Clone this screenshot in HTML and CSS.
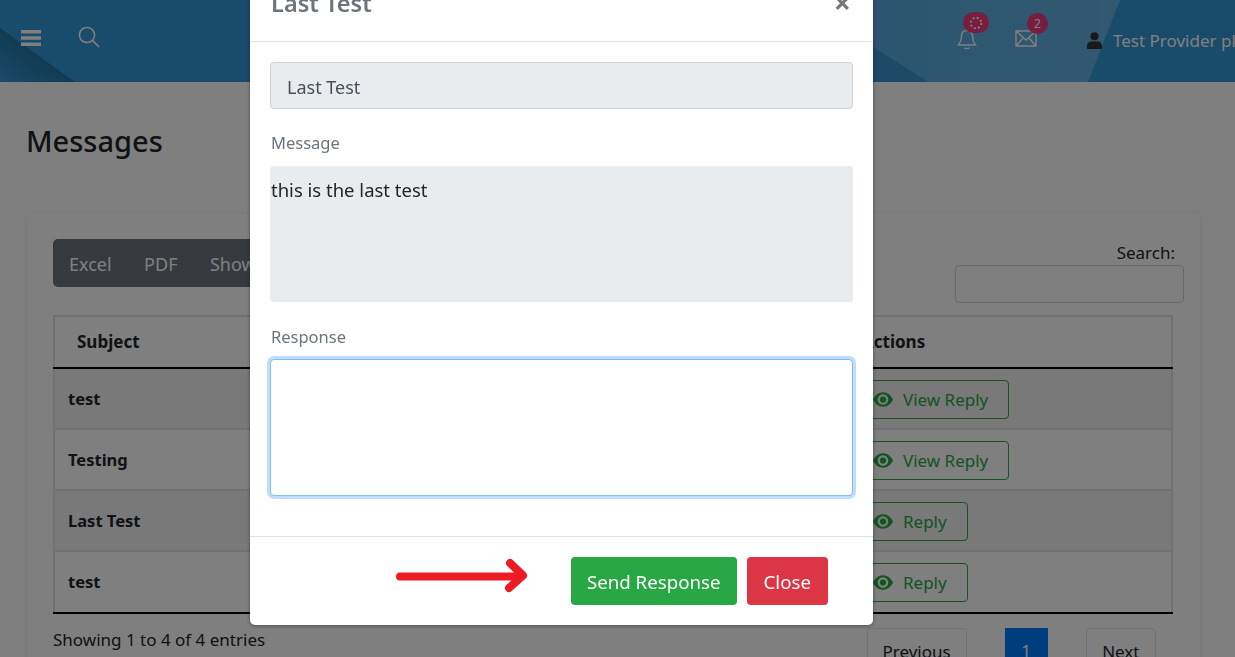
FILE: index.html
```html
<!DOCTYPE html>
<html lang="en">
<head>
    <meta charset="UTF-8">
    <meta name="viewport" content="width=device-width, initial-scale=1.0">
    <title>Messages</title>
    <link rel="stylesheet" href="styles.css">
</head>
<body>
    <header class="topbar">
        <svg class="topbar-bg" viewBox="0 0 1235 82" preserveAspectRatio="none">
            <defs>
                <linearGradient id="shade" x1="0" y1="1" x2="0.55" y2="0.45">
                    <stop offset="0" stop-color="#3298d6"/>
                    <stop offset="1" stop-color="#24709f"/>
                </linearGradient>
                <linearGradient id="band" x1="0" y1="0" x2="1" y2="0">
                    <stop offset="0" stop-color="#56abe0"/>
                    <stop offset="1" stop-color="#66b2e2"/>
                </linearGradient>
            </defs>
            <polygon points="0,28 75,82 0,82" fill="url(#shade)"/>
            <polygon points="873,47 928,82 1088,82 1120,0 873,0" fill="url(#band)"/>
            <polygon points="873,47 928,82 873,82" fill="#3a94cc"/>
        </svg>
        <div class="topbar-left">
            <svg class="icon-bars" viewBox="0 0 20 16"><path d="M0 0h20v3.600H0zM0 6.200h20v3.600H0zM0 12.400h20V16H0z"/></svg>
            <svg class="icon-search" viewBox="0 0 22 22"><circle cx="9" cy="9" r="7.600"/><path d="M14.400 14.400L21 21"/></svg>
        </div>
        <div class="topbar-right">
            <div class="notify">
                <svg class="icon-bell" viewBox="0 0 20 20"><path d="M10 1.500c-3.500 0-5.500 2.500-5.500 6 0 4-1 6-3 8.500h17c-2-2.500-3-4.500-3-8.500 0-3.500-2-6-5.500-6z"/><path d="M8 18.500a2 1.500 0 0 0 4 0"/></svg>
                <span class="badge badge-dots">
                    <svg viewBox="0 0 14 14"><circle cx="7" cy="7" r="5.300" stroke-dasharray="2 2.160"/></svg>
                </span>
            </div>
            <div class="notify notify-mail">
                <svg class="icon-mail" viewBox="0 0 22 17"><path d="M1 1h20v15H1zM1 1l10 9 10-9M1 16l7.500-8.500M21 16l-7.500-8.500"/></svg>
                <span class="badge">2</span>
            </div>
            <div class="user">
                <svg class="icon-user" viewBox="0 0 16 18"><circle cx="8" cy="4.500" r="4.300"/><path d="M0 18v-3c0-3 2-5 4.500-5h7c2.500 0 4.500 2 4.500 5v3z"/></svg>
                <span>Test Provider platform</span>
            </div>
        </div>
    </header>

    <main class="content">
        <h1>Messages</h1>
        <section class="card">
            <div class="toolbar">
                <div class="btn-group">
                    <span>Excel</span>
                    <span>PDF</span>
                    <span>Show 10 rows</span>
                </div>
                <label class="search"><span class="search-text">Search:</span>
                    <input type="text">
                </label>
            </div>
            <table class="messages">
                <colgroup>
                    <col class="col-subject">
                    <col>
                    <col class="col-actions">
                </colgroup>
                <thead>
                    <tr>
                        <th class="th-subject">Subject</th>
                        <th></th>
                        <th>Actions</th>
                    </tr>
                </thead>
                <tbody>
                    <tr class="odd">
                        <td>test</td>
                        <td></td>
                        <td><a class="btn-outline"><svg class="icon-eye" viewBox="0 0 22 16"><path fill-rule="evenodd" d="M11 0c5 0 9 3.500 11 8-2 4.500-6 8-11 8S2 12.500 0 8c2-4.500 6-8 11-8zm0 2.200a5.800 5.800 0 1 0 0 11.600 5.800 5.800 0 0 0 0-11.600z"/><circle cx="11" cy="8" r="3.400"/></svg>View Reply</a></td>
                    </tr>
                    <tr>
                        <td>Testing</td>
                        <td></td>
                        <td><a class="btn-outline"><svg class="icon-eye" viewBox="0 0 22 16"><path fill-rule="evenodd" d="M11 0c5 0 9 3.500 11 8-2 4.500-6 8-11 8S2 12.500 0 8c2-4.500 6-8 11-8zm0 2.200a5.800 5.800 0 1 0 0 11.600 5.800 5.800 0 0 0 0-11.600z"/><circle cx="11" cy="8" r="3.400"/></svg>View Reply</a></td>
                    </tr>
                    <tr class="odd">
                        <td>Last Test</td>
                        <td></td>
                        <td><a class="btn-outline"><svg class="icon-eye" viewBox="0 0 22 16"><path fill-rule="evenodd" d="M11 0c5 0 9 3.500 11 8-2 4.500-6 8-11 8S2 12.500 0 8c2-4.500 6-8 11-8zm0 2.200a5.800 5.800 0 1 0 0 11.600 5.800 5.800 0 0 0 0-11.600z"/><circle cx="11" cy="8" r="3.400"/></svg>Reply</a></td>
                    </tr>
                    <tr class="last-row">
                        <td>test</td>
                        <td></td>
                        <td><a class="btn-outline"><svg class="icon-eye" viewBox="0 0 22 16"><path fill-rule="evenodd" d="M11 0c5 0 9 3.500 11 8-2 4.500-6 8-11 8S2 12.500 0 8c2-4.500 6-8 11-8zm0 2.200a5.800 5.800 0 1 0 0 11.600 5.800 5.800 0 0 0 0-11.600z"/><circle cx="11" cy="8" r="3.400"/></svg>Reply</a></td>
                    </tr>
                </tbody>
            </table>
            <div class="table-foot">
                <div class="info">Showing 1 to 4 of 4 entries</div>
                <div class="pagination">
                    <a class="page-btn page-prev">Previous</a>
                    <a class="page-current">1</a>
                    <a class="page-btn page-next">Next</a>
                </div>
            </div>
        </section>
    </main>

    <div class="backdrop"></div>

    <div class="modal">
        <div class="modal-header">
            <h5>Last Test</h5>
            <span class="close">&times;</span>
        </div>
        <div class="modal-body">
            <div class="subject-field">Last Test</div>
            <label class="field-label">Message</label>
            <div class="message-field">this is the last test</div>
            <label class="field-label field-label-response">Response</label>
            <textarea class="response-field"></textarea>
        </div>
        <div class="modal-footer">
            <svg class="arrow" viewBox="0 0 132 36"><path d="M4 18.500H122M114 5l13 12.500L113 30"/></svg>
            <button class="btn btn-send">Send Response</button>
            <button class="btn btn-close">Close</button>
        </div>
    </div>
</body>
</html>
```
FILE: styles.css
```css
html, body {
    height: 657px;
    overflow: hidden;
}
body {
    margin: 0;
    font-family: "Noto Sans", "Open Sans", sans-serif;
    font-size: 17px;
    color: #212529;
    background-color: #fff;
}
.topbar {
    position: relative;
    display: flex;
    justify-content: space-between;
    height: 82px;
    background-color: #3298d6;
    overflow: hidden;
}
.topbar-bg {
    position: absolute;
    left: 0;
    top: 0;
    width: 100%;
    height: 100%;
}
.topbar-left, .topbar-right {
    position: relative;
    display: flex;
    align-items: center;
}
.topbar-left {
    padding: 0 0 8px 21px;
    gap: 37px;
}
.icon-bars {
    width: 20px;
    height: 16px;
    margin-top: 2px;
    fill: #fff;
}
.icon-search {
    width: 22px;
    height: 22px;
    fill: none;
    stroke: #fff;
    stroke-width: 1.5;
}
.topbar-right {
    white-space: nowrap;
}
.notify {
    position: relative;
    width: 20px;
    height: 20px;
    margin-right: 38px;
    margin-top: -4px;
}
.notify-mail {
    width: 22px;
    margin-right: 50px;
}
.icon-bell {
    width: 20px;
    height: 20px;
    fill: none;
    stroke: #fff;
    stroke-width: 1.4;
}
.icon-mail {
    width: 22px;
    height: 17px;
    fill: none;
    stroke: #fff;
    stroke-width: 1.4;
}
.badge {
    position: absolute;
    left: 12px;
    top: -16px;
    display: flex;
    align-items: center;
    justify-content: center;
    width: 21px;
    height: 21px;
    border-radius: 50%;
    background-color: #ee3a7c;
    color: #fff;
    font-size: 12px;
}
.badge-dots {
    left: 6px;
    top: -17px;
    width: 26px;
    height: 21px;
    border-radius: 11px;
}
.badge-dots svg {
    width: 14px;
    height: 14px;
    fill: none;
    stroke: #fff;
    stroke-width: 1.8;
}
.user {
    display: flex;
    align-items: center;
    gap: 11px;
    width: 148px;
    overflow: hidden;
    color: #fff;
    font-size: 17px;
    margin-top: -1px;
}
.icon-user {
    flex: none;
    width: 15px;
    height: 17px;
    fill: #333;
}
.content {
    padding: 0 35px 0 27px;
}
h1 {
    margin: 0 0 0 -1px;
    padding-top: 39px;
    font-size: 29px;
    font-weight: 500;
    line-height: 40px;
}
.card {
    margin-top: 53px;
    padding: 25px 16px 0 26px;
    background-color: #fff;
    box-shadow: 0 0 6px rgba(0, 0, 0, 0.08);
}
.toolbar {
    display: flex;
    justify-content: space-between;
    height: 76px;
}
.btn-group {
    display: flex;
    align-items: center;
    gap: 32.500px;
    height: 48px;
    padding: 2px 16px 0;
    box-sizing: border-box;
    border-radius: 5px;
    background-color: #6c757d;
    color: #fff;
    font-size: 18px;
    white-space: nowrap;
}
.search {
    display: flex;
    flex-direction: column;
    align-items: flex-end;
    line-height: 26px;
}
.search-text {
    margin-right: 9px;
    padding-top: 1px;
    height: 25px;
}
.search input {
    width: 229px;
    height: 38px;
    box-sizing: border-box;
    border: 1px solid #ced4da;
    border-radius: 4px;
    background-color: transparent;
}
.messages {
    width: 1120px;
    border-collapse: collapse;
    table-layout: fixed;
    border: 2px solid #dee2e6;
    border-bottom: 2px solid #000;
}
.col-subject {
    width: 200px;
}
.col-actions {
    width: 323px;
}
th, td {
    padding: 0 13px;
    text-align: left;
    font-weight: 700;
}
th {
    height: 52px;
    padding-bottom: 2px;
    box-sizing: border-box;
    border-bottom: 2px solid #000;
}
.th-subject {
    padding-left: 22px;
}
td {
    height: 59px;
    font-size: 16.500px;
    border-top: 2px solid #dee2e6;
}
tr.odd td {
    background-color: #f2f2f2;
}
tr.last-row td {
    height: 59px;
    padding-bottom: 1px;
}
.btn-outline {
    display: inline-flex;
    align-items: center;
    gap: 10px;
    height: 39px;
    margin-top: 2px;
    padding: 0 20px 0 10px;
    box-sizing: border-box;
    border: 1px solid #28a745;
    border-radius: 4px;
    color: #28a745;
    font-size: 17px;
    font-weight: 400;
}
.icon-eye {
    width: 20px;
    height: 15px;
    fill: #28a745;
}
.table-foot {
    display: flex;
    justify-content: space-between;
    padding-top: 14px;
}
.pagination {
    display: flex;
    gap: 38px;
    margin-right: 28px;
}
.page-btn {
    height: 46px;
    padding: 11px 15px 0;
    box-sizing: border-box;
    border: 1px solid #dee2e6;
    border-radius: 4px;
}
.page-next {
    padding: 11px 15.500px 0;
}
.page-current {
    height: 46px;
    width: 43px;
    padding-top: 11px;
    box-sizing: border-box;
    text-align: center;
    background-color: #007bff;
    color: #fff;
}
.backdrop {
    position: fixed;
    left: 0;
    top: 0;
    width: 100%;
    height: 100%;
    background-color: rgba(0, 0, 0, 0.5);
}
.modal {
    position: fixed;
    left: 250px;
    top: -28px;
    width: 623px;
    background-color: #fff;
    border-radius: 5px;
    box-shadow: 0 1px 4px rgba(0, 0, 0, 0.4);
}
.modal-header {
    display: flex;
    justify-content: space-between;
    height: 70px;
    padding: 16px 22px 0 21px;
    box-sizing: border-box;
    border-bottom: 1px solid #dee2e6;
}
h5 {
    margin: 0;
    font-size: 23.600px;
    font-weight: 600;
    line-height: 30px;
    color: #6c757d;
}
.close {
    font-size: 30px;
    font-weight: 700;
    line-height: 30px;
    color: #777;
}
.modal-body {
    padding: 20px 20px 40px;
}
.subject-field {
    height: 47px;
    padding: 0 16px;
    box-sizing: border-box;
    line-height: 48px;
    font-size: 18px;
    border: 1px solid #ced4da;
    border-radius: 4px;
    background-color: #e9ecef;
    color: #495057;
}
.field-label {
    display: block;
    height: 57px;
    padding-top: 21px;
    box-sizing: border-box;
    padding-left: 1px;
    font-size: 16.500px;
    line-height: 26px;
    color: #6c757d;
}
.field-label-response {
    padding-top: 22px;
}
.message-field {
    height: 136px;
    padding-left: 1px;
    padding-top: 9px;
    box-sizing: border-box;
    border-radius: 4px;
    background-color: #e9ecef;
    font-size: 18.500px;
    line-height: 30px;
}
.response-field {
    display: block;
    width: 583px;
    height: 137px;
    box-sizing: border-box;
    border: 1px solid #80bdff;
    border-radius: 4px;
    box-shadow: 0 0 0 3px rgba(0, 123, 255, 0.25);
    outline: none;
    resize: none;
}
.modal-footer {
    position: relative;
    display: flex;
    justify-content: flex-end;
    gap: 10px;
    padding: 20px 45px 20px 0;
    border-top: 1px solid #dee2e6;
}
.arrow {
    position: absolute;
    left: 146px;
    top: 21px;
    width: 132px;
    height: 36px;
    fill: none;
    stroke: #ed1c24;
    stroke-width: 8;
    stroke-linecap: round;
    stroke-linejoin: round;
}
.btn {
    height: 48px;
    padding: 0 16px;
    border: none;
    border-radius: 4px;
    color: #fff;
    font-family: inherit;
    font-size: 18.700px;
}
.btn-send {
    background-color: #28a745;
}
.btn-close {
    padding: 0 17px;
    background-color: #dc3545;
}
```
